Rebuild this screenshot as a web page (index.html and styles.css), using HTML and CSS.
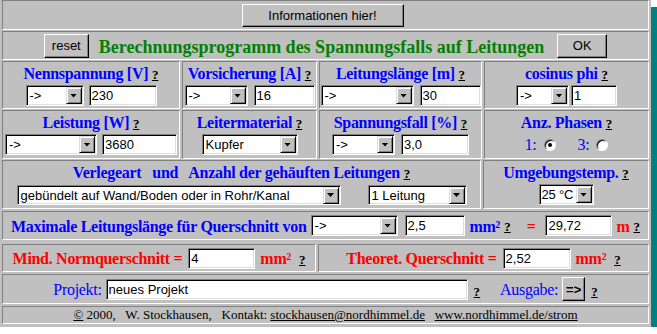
FILE: index.html
```html
<!DOCTYPE html>
<html>
<head>
  <title>Spannungsfall auf Leitungen</title>
  <link rel="stylesheet" href="styles.css">
</head>
<body>
  <div class="page">
    <div class="box r1">
      <button class="btn info">Informationen hier!</button>
    </div>

    <div class="box r2">
      <button class="btn reset">reset</button>
      <h1 class="title">Berechnungsprogramm des Spannungsfalls auf Leitungen</h1>
      <button class="btn ok">OK</button>
    </div>

    <div class="row r3">
      <div class="box cell c1">
        <div class="lbl">Nennspannung [V] <a class="q">?</a></div>
        <div class="ctl g5">
          <div class="sel s-nenn"><span class="val">-&gt;</span><span class="dd"><i></i></span></div>
          <div class="inp i-nenn">230</div>
        </div>
      </div>
      <div class="box cell c2">
        <div class="lbl">Vorsicherung [A] <a class="q">?</a></div>
        <div class="ctl g6">
          <div class="sel s-vor"><span class="val">-&gt;</span><span class="dd"><i></i></span></div>
          <div class="inp i-vor">16</div>
        </div>
      </div>
      <div class="box cell c3">
        <div class="lbl">Leitungslänge [m] <a class="q">?</a></div>
        <div class="ctl g6">
          <div class="sel s-len"><span class="val">-&gt;</span><span class="dd"><i></i></span></div>
          <div class="inp i-len">30</div>
        </div>
      </div>
      <div class="box cell c4">
        <div class="lbl">cosinus phi <a class="q">?</a></div>
        <div class="ctl g2">
          <div class="sel s-cos"><span class="val">-&gt;</span><span class="dd"><i></i></span></div>
          <div class="inp i-cos">1</div>
        </div>
      </div>
    </div>

    <div class="row r4">
      <div class="box cell c1">
        <div class="lbl">Leistung [W] <a class="q">?</a></div>
        <div class="ctl g5">
          <div class="sel s-leist"><span class="val">-&gt;</span><span class="dd"><i></i></span></div>
          <div class="inp i-leist">3680</div>
        </div>
      </div>
      <div class="box cell c2">
        <div class="lbl">Leitermaterial <a class="q">?</a></div>
        <div class="ctl">
          <div class="sel s-mat"><span class="val">Kupfer</span><span class="dd"><i></i></span></div>
        </div>
      </div>
      <div class="box cell c3">
        <div class="lbl">Spannungsfall [%] <a class="q">?</a></div>
        <div class="ctl g6">
          <div class="sel s-fall"><span class="val">-&gt;</span><span class="dd"><i></i></span></div>
          <div class="inp i-fall">3,0</div>
        </div>
      </div>
      <div class="box cell c4">
        <div class="lbl">Anz. Phasen <a class="q">?</a></div>
        <div class="ctl radios">
          <span class="txt">1:</span><span class="radio on"></span>
          <span class="txt gap">3:</span><span class="radio"></span>
        </div>
      </div>
    </div>

    <div class="row r5">
      <div class="box cell c-verl">
        <div class="lbl">Verlegeart &nbsp; und &nbsp; Anzahl der gehäuften Leitungen <a class="q">?</a></div>
        <div class="ctl g27">
          <div class="sel s-verl"><span class="val">gebündelt auf Wand/Boden oder in Rohr/Kanal</span><span class="dd"><i></i></span></div>
          <div class="sel s-anz"><span class="val">1 Leitung</span><span class="dd"><i></i></span></div>
        </div>
      </div>
      <div class="box cell c-temp">
        <div class="lbl">Umgebungstemp. <a class="q">?</a></div>
        <div class="ctl">
          <div class="sel s-temp"><span class="val">25 °C</span><span class="dd"><i></i></span></div>
        </div>
      </div>
    </div>

    <div class="box line r6">
      <span class="txt blue bold">Maximale Leitungslänge für Querschnitt von</span>
      <div class="sel s-quer"><span class="val">-&gt;</span><span class="dd"><i></i></span></div>
      <div class="inp i-quer">2,5</div>
      <span class="txt blue bold mm">mm²</span>
      <a class="q">?</a>
      <span class="txt red bold eq">=</span>
      <div class="inp i-max">29,72</div>
      <span class="txt red bold m">m</span>
      <a class="q">?</a>
    </div>

    <div class="row r7">
      <div class="box line c-norm">
        <span class="txt red bold">Mind. Normquerschnitt =</span>
        <div class="inp i-norm">4</div>
        <span class="txt red bold mm">mm²</span>
        <a class="q">?</a>
      </div>
      <div class="box line c-theo">
        <span class="txt red bold">Theoret. Querschnitt =</span>
        <div class="inp i-theo">2,52</div>
        <span class="txt red bold mm">mm²</span>
        <a class="q">?</a>
      </div>
    </div>

    <div class="box line r8">
      <span class="txt blue">Projekt:</span>
      <div class="inp i-proj">neues Projekt</div>
      <a class="q">?</a>
      <span class="txt blue ausgabe">Ausgabe:</span>
      <button class="btn out">=&gt;</button>
      <a class="q">?</a>
    </div>

    <div class="box r9">
      <u>©</u> 2000, &nbsp; W. Stockhausen, &nbsp; Kontakt: <u>stockhausen@nordhimmel.de</u> &nbsp; <u>www.nordhimmel.de/strom</u>
    </div>
  </div>
</body>
</html>
```

FILE: styles.css
```css
body {
  margin: 0;
  background: #fff;
}

.page {
  width: 651px;
  height: 327px;
  box-sizing: border-box;
  padding: 0 2px;
  background: #c0c0c0;
  box-shadow: 6px 7px 0 #008080;
  font-family: "Liberation Serif", "Times New Roman", serif;
}

/* sunken table cells */
.box {
  box-sizing: border-box;
  border: 1px solid;
  border-color: #808080 #fff #fff #808080;
}

.row {
  display: flex;
  gap: 2px;
}

.r1 {
  height: 30px;
  display: flex;
  align-items: center;
  justify-content: center;
}

.r2 {
  height: 29px;
  margin-top: 1px;
  display: flex;
  align-items: center;
  justify-content: center;
}

.r3 { height: 48px; margin-top: 1px; }
.r4 { height: 49px; margin-top: 1px; }
.r5 { height: 49px; margin-top: 1px; }
.r6 { height: 29px; margin-top: 2px; }
.r7 { height: 28px; margin-top: 4px; }
.r8 { height: 30px; margin-top: 2px; }

.r9 {
  height: 18px;
  margin-top: 2px;
  font-size: 13px;
  line-height: 16px;
  text-align: center;
  color: #000;
}

.r3 .c1, .r4 .c1 { width: 178px; }
.r3 .c2, .r4 .c2 { width: 135px; }
.r3 .c3, .r4 .c3 { width: 163px; }
.r3 .c4, .r4 .c4 { width: 165px; }
.c-verl { width: 479px; }
.c-temp { width: 166px; }
.c-norm { width: 314px; }
.c-theo { width: 331px; }

.cell {
  padding-top: 3px;
}

.lbl {
  font-size: 16px;
  font-weight: bold;
  letter-spacing: -0.3px;
  line-height: 18px;
  color: #0000ff;
  text-align: center;
  white-space: nowrap;
}

.q {
  font-family: "Liberation Serif", serif;
  font-size: 13px;
  font-weight: bold;
  letter-spacing: 0;
  color: #000;
  text-decoration: underline;
}

.ctl {
  display: flex;
  justify-content: center;
  align-items: center;
  margin-top: 1px;
  height: 21px;
}

.g2 { gap: 2px; }
.g5 { gap: 5px; }
.g6 { gap: 6px; }
.g27 { gap: 27px; }

/* one-line rows */
.line {
  display: flex;
  align-items: center;
  justify-content: center;
}

.txt {
  font-size: 16px;
  letter-spacing: -0.3px;
  white-space: nowrap;
  padding-top: 2px;
}

.blue { color: #0000ff; }
.red { color: #ff0000; }
.bold { font-weight: bold; }

.r6 .sel { margin-left: 4px; }
.r6 .i-quer { margin-left: 7px; }
.r6 .mm { margin-left: 5px; }
.r6 .q { margin-left: 4px; padding-top: 3px; }
.r6 .eq { margin-left: 16px; }
.r6 .i-max { margin-left: 10px; }
.r6 .m { margin-left: 4px; }

.r7 .inp { margin-left: 6px; }
.r7 .mm { margin-left: 5px; }
.r7 .q { margin-left: 8px; padding-top: 3px; }

.r8 .inp { margin-left: 4px; }
.r8 .q { margin-left: 6px; padding-top: 5px; }
.r8 .ausgabe { margin-left: 20px; }
.r8 .btn { margin-left: 4px; }

/* inputs */
.inp {
  box-sizing: border-box;
  height: 21px;
  padding-left: 2px;
  background: #fff;
  border: 1px solid;
  border-color: #808080 #fff #fff #808080;
  box-shadow: inset 1px 1px 0 #000, inset -1px -1px 0 #dfdfdf;
  font-family: "Liberation Sans", Arial, sans-serif;
  font-size: 13px;
  line-height: 19px;
  color: #000;
  white-space: nowrap;
}

.sel {
  box-sizing: border-box;
  display: flex;
  height: 21px;
  padding: 1px;
  background: #fff;
  border: 1px solid;
  border-color: #808080 #fff #fff #808080;
  box-shadow: inset 1px 1px 0 #000, inset -1px -1px 0 #dfdfdf;
  font-family: "Liberation Sans", Arial, sans-serif;
  font-size: 13px;
  color: #000;
}

.sel .val {
  flex: 1;
  overflow: hidden;
  padding-left: 2px;
  padding-top: 1px;
  line-height: 16px;
  white-space: nowrap;
}

.sel .dd {
  box-sizing: border-box;
  flex: none;
  width: 16px;
  height: 17px;
  display: flex;
  align-items: center;
  justify-content: center;
  background: #c0c0c0;
  border: 1px solid;
  border-color: #dfdfdf #000 #000 #dfdfdf;
  box-shadow: inset 1px 1px 0 #fff, inset -1px -1px 0 #808080;
}

.sel .dd i {
  width: 7px;
  height: 4px;
  background: #000;
  clip-path: polygon(0 0, 100% 0, 50% 100%);
}

.s-nenn { width: 58px; }
.i-nenn { width: 68px; }
.s-vor { width: 63px; }
.i-vor { width: 61px; }
.s-len { width: 93px; }
.i-len { width: 61px; }
.s-cos { width: 53px; }
.i-cos { width: 46px; }
.s-leist { width: 92px; }
.i-leist { width: 75px; }
.s-mat { width: 96px; }
.s-fall { width: 63px; }
.i-fall { width: 68px; }
.s-verl { width: 324px; height: 20px; }
.s-anz { width: 99px; height: 20px; }
.s-temp { width: 55px; }
.s-temp .val { padding-left: 1px; letter-spacing: -0.2px; }
.s-quer { width: 87px; }
.i-quer { width: 60px; }
.i-max { width: 67px; }
.i-norm { width: 67px; }
.i-theo { width: 68px; }
.i-proj { width: 362px; }

/* radios */
.radios .txt {
  color: #0000ff;
  padding-top: 0;
}

.radios .gap { margin-left: 22px; }

.radio {
  box-sizing: border-box;
  width: 12px;
  height: 12px;
  margin-left: 7px;
  border-radius: 50%;
  border: 1px solid;
  border-color: #808080 #fff #fff #808080;
  background: #fff;
  box-shadow: inset 1px 1px 0 #000;
  display: flex;
  align-items: center;
  justify-content: center;
}

.radio.on::after {
  content: "";
  width: 4px;
  height: 4px;
  border-radius: 50%;
  background: #000;
}

/* raised buttons */
.btn {
  box-sizing: border-box;
  margin: 0;
  padding: 0;
  background: #c0c0c0;
  border: 1px solid;
  border-color: #fff #000 #000 #fff;
  box-shadow: inset -1px -1px 0 #808080;
  font-family: "Liberation Sans", Arial, sans-serif;
  font-size: 13px;
  color: #000;
}

.info { width: 162px; height: 23px; margin-left: -6px; }
.reset { width: 45px; height: 24px; }
.ok { width: 50px; height: 24px; }
.out { width: 23px; height: 24px; font-weight: bold; }

.title {
  margin: 0 13px 0 10px;
  font-size: 18px;
  font-weight: bold;
  color: #008000;
  padding-top: 3px;
  white-space: nowrap;
}
```
